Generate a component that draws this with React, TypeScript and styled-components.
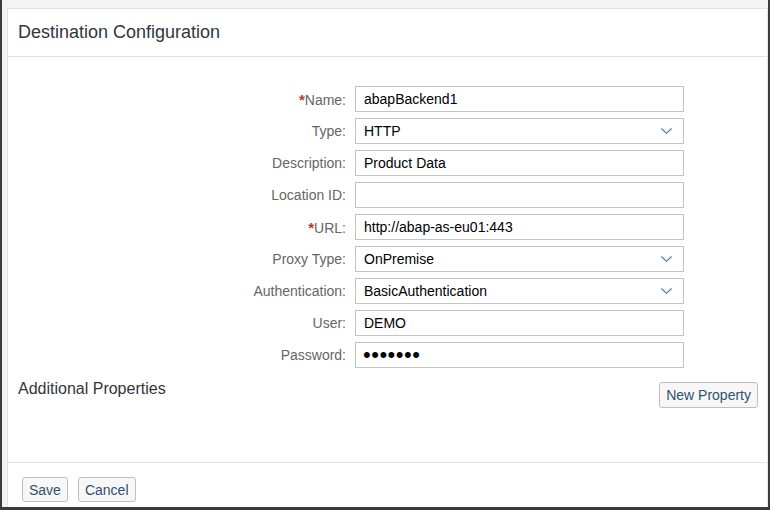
import React from "react";
import styled, { createGlobalStyle } from "styled-components";

const Global = createGlobalStyle`
  html, body { margin: 0; padding: 0; }
  body {
    background: #f3f3f3;
    font-family: "Liberation Sans", Arial, sans-serif;
  }
  * { box-sizing: border-box; }
`;

const Frame = styled.div`
  height: 510px;
  width: 770px;
  border-left: 2px solid #3b3b3b;
  border-right: 2px solid #3b3b3b;
  border-bottom: 3px solid #3b3b3b;
  padding: 8px 0 0 5px;
  display: flex;
  overflow: hidden;
`;

const Panel = styled.div`
  flex: 1;
  background: #fff;
  border: 1px solid #e2e2e2;
  border-right-color: #e8e8e8;
  border-bottom: none;
  display: flex;
  flex-direction: column;
`;

const Header = styled.div`
  height: 48px;
  border-bottom: 1px solid #e2e2e2;
  display: flex;
  align-items: center;
  padding: 0 10px 1px;
`;

const Title = styled.h1`
  margin: 0;
  font-size: 18px;
  font-weight: normal;
  color: #32363a;
`;

const Content = styled.div`
  height: 406px;
  border-bottom: 1px solid #e2e2e2;
  display: flex;
  flex-direction: column;
`;

const Form = styled.div`
  display: grid;
  grid-template-columns: 338px 329px;
  column-gap: 9px;
  row-gap: 6px;
  padding-top: 29px;
`;

const Label = styled.label`
  font-size: 14px;
  color: #666;
  text-align: right;
  align-self: center;
  white-space: nowrap;
`;

const Req = styled.span`
  color: #b03a3a;
  font-size: 15px;
  font-weight: bold;
`;

const TextInput = styled.input`
  height: 26px;
  width: 100%;
  border: 1px solid #c4c4c4;
  background: #fff;
  padding: 0 8px;
  font-family: "Liberation Sans", Arial, sans-serif;
  font-size: 14px;
  color: #000;
  outline: none;
  margin: 0;
`;

const PasswordText = styled(TextInput)`
  font-size: 22px;
  padding: 0 7px;
  letter-spacing: 0.5px;
`;

const Select = styled.div`
  height: 26px;
  border: 1px solid #c4c4c4;
  background: #fff;
  padding: 0 11px 0 8px;
  display: flex;
  align-items: center;
  justify-content: space-between;
  font-size: 14px;
  color: #000;
`;

const Chevron = styled.svg`
  width: 11px;
  height: 6px;
`;

const PropsRow = styled.div`
  display: flex;
  justify-content: space-between;
  align-items: flex-start;
  padding: 12px 9px 0 10px;
`;

const SubTitle = styled.div`
  font-size: 16px;
  color: #32363a;
`;

const Button = styled.button`
  height: 25px;
  padding: 0 6px;
  border: 1px solid #bfbfbf;
  border-radius: 3px;
  background: #f7f7f7;
  font-family: "Liberation Sans", Arial, sans-serif;
  font-size: 14px;
  color: #2f5170;
  cursor: pointer;
`;

const PropsButton = styled(Button)`
  height: 26px;
  margin-top: 2px;
`;

const Footer = styled.div`
  display: flex;
  gap: 10px;
  padding: 14px 0 0 14px;
`;

const ChevronIcon = () => (
  <Chevron viewBox="0 0 11 6">
    <path d="M0.5 0.5 L5.5 5.3 L10.5 0.5" fill="none" stroke="#4f7499" strokeWidth="1.1" />
  </Chevron>
);

type Field = { label: string; value: string; required?: boolean; kind?: "select" | "password" };

const fields: Field[] = [
  { label: "Name:", value: "abapBackend1", required: true },
  { label: "Type:", value: "HTTP", kind: "select" },
  { label: "Description:", value: "Product Data" },
  { label: "Location ID:", value: "" },
  { label: "URL:", value: "http://abap-as-eu01:443", required: true },
  { label: "Proxy Type:", value: "OnPremise", kind: "select" },
  { label: "Authentication:", value: "BasicAuthentication", kind: "select" },
  { label: "User:", value: "DEMO" },
  { label: "Password:", value: "abcdefg", kind: "password" },
];

export default function App() {
  return (
    <>
      <Global />
      <Frame>
        <Panel>
          <Header>
            <Title>Destination Configuration</Title>
          </Header>
          <Content>
            <Form>
              {fields.map((f) => (
                <React.Fragment key={f.label}>
                  <Label>
                    {f.required && <Req>*</Req>}
                    {f.label}
                  </Label>
                  {f.kind === "select" ? (
                    <Select>
                      <span>{f.value}</span>
                      <ChevronIcon />
                    </Select>
                  ) : f.kind === "password" ? (
                    <PasswordText type="password" value={f.value} readOnly />
                  ) : (
                    <TextInput type="text" value={f.value} readOnly />
                  )}
                </React.Fragment>
              ))}
            </Form>
            <PropsRow>
              <SubTitle>Additional Properties</SubTitle>
              <PropsButton>New Property</PropsButton>
            </PropsRow>
          </Content>
          <Footer>
            <Button>Save</Button>
            <Button>Cancel</Button>
          </Footer>
        </Panel>
      </Frame>
    </>
  );
}
